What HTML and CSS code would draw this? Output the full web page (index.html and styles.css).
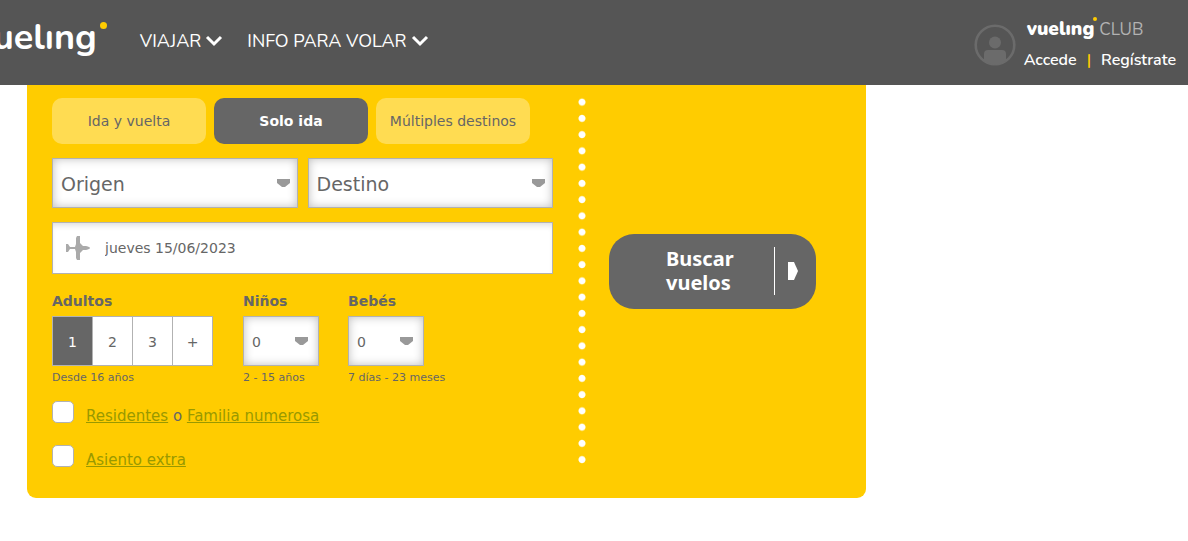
FILE: index.html
```html
<!DOCTYPE html>
<html lang="es">
<head>
<meta charset="utf-8">
<title>Vueling</title>
<link rel="stylesheet" href="styles.css">
</head>
<body>
<header class="header">
  <a class="logo" href="#">vuelıng<span class="logo-dot"></span></a>
  <nav class="nav">
    <a href="#">VIAJAR <svg class="chevron" viewBox="0 0 18 12"><path d="M2 2l7 7 7-7"/></svg></a>
    <a href="#">INFO PARA VOLAR <svg class="chevron" viewBox="0 0 18 12"><path d="M2 2l7 7 7-7"/></svg></a>
  </nav>
  <div class="account">
    <svg class="avatar" viewBox="0 0 42 42">
      <circle cx="21" cy="21" r="19.3" fill="none" stroke="#6b6b6b" stroke-width="2.6"/>
      <circle cx="21" cy="18.500" r="6" fill="#6b6b6b"/>
      <path d="M10 37v-7q0-4 4-4h14q4 0 4 4v7q-11 7-22 0z" fill="#6b6b6b"/>
    </svg>
    <div>
      <div class="club"><strong>vuelıng<span class="club-dot"></span></strong><span>CLUB</span></div>
      <div class="account-links"><a href="#">Accede</a><span class="divider">|</span><a href="#">Regístrate</a></div>
    </div>
  </div>
</header>
<main>
  <form class="search">
    <div class="fields">
      <div class="tabs">
        <button type="button" class="tab">Ida y vuelta</button>
        <button type="button" class="tab active">Solo ida</button>
        <button type="button" class="tab">Múltiples destinos</button>
      </div>
      <div class="route">
        <div class="select large">
          <select aria-label="Origen"><option>Origen</option></select>
          <svg class="arrow" viewBox="0 0 13 8"><path d="M0 0h13v4L8 8H5L0 4z"/></svg>
        </div>
        <div class="select large">
          <select aria-label="Destino"><option>Destino</option></select>
          <svg class="arrow" viewBox="0 0 13 8"><path d="M0 0h13v4L8 8H5L0 4z"/></svg>
        </div>
      </div>
      <div class="date">
        <svg class="plane" viewBox="0 0 26 26"><path d="M1 9h2l2 3h5l1-3V3l1-2h3v7l3 3h3q4 1 4 2t-4 2h-3l-3 3v7h-3l-1-2v-6l-1-3H5l-2 3H1z"/></svg>
        <input type="text" aria-label="Fecha de ida" value="jueves 15/06/2023">
      </div>
      <div class="passengers">
        <fieldset class="adults">
          <legend class="label">Adultos</legend>
          <div class="counts">
            <label><input type="radio" name="adults" checked><span>1</span></label>
            <label><input type="radio" name="adults"><span>2</span></label>
            <label><input type="radio" name="adults"><span>3</span></label>
            <button type="button" aria-label="Más adultos">+</button>
          </div>
          <div class="hint">Desde 16 años</div>
        </fieldset>
        <div class="group">
          <label class="label" for="children">Niños</label>
          <div class="select small">
            <select id="children"><option>0</option></select>
            <svg class="arrow" viewBox="0 0 13 8"><path d="M0 0h13v4L8 8H5L0 4z"/></svg>
          </div>
          <div class="hint">2 - 15 años</div>
        </div>
        <div class="group">
          <label class="label" for="babies">Bebés</label>
          <div class="select small">
            <select id="babies"><option>0</option></select>
            <svg class="arrow" viewBox="0 0 13 8"><path d="M0 0h13v4L8 8H5L0 4z"/></svg>
          </div>
          <div class="hint">7 días - 23 meses</div>
        </div>
      </div>
      <div class="options">
        <div class="option">
          <input type="checkbox" aria-labelledby="discount">
          <span id="discount"><a href="#">Residentes</a> o <a href="#">Familia numerosa</a></span>
        </div>
        <div class="option">
          <input type="checkbox" aria-labelledby="seat">
          <span id="seat"><a href="#">Asiento extra</a></span>
        </div>
      </div>
    </div>
    <div class="dots"></div>
    <button type="submit" class="submit">
      <span class="submit-text">Buscar vuelos</span>
      <span class="submit-icon"><svg viewBox="0 0 10 18"><path d="M0 0h6l4 9-4 9H0z"/></svg></span>
    </button>
  </form>
</main>
</body>
</html>
```
FILE: styles.css
```css
* { box-sizing: border-box; }
body {
  margin: 0;
  background: #fff;
  color: #666;
  font: 14px/20px Verdana, "DejaVu Sans", sans-serif;
}
button, input, select { font: inherit; color: inherit; margin: 0; }

.header {
  display: flex;
  align-items: center;
  height: 85px;
  padding-right: 12px;
  background: #555;
  color: #fff;
  font-family: Nunito, Lato, sans-serif;
  overflow: hidden;
}
.header a { color: inherit; text-decoration: none; }
.logo {
  position: relative;
  margin-left: -26px;
  padding-bottom: 10px;
  font-size: 36px;
  font-weight: 700;
  line-height: 48px;
}
.logo-dot {
  position: absolute;
  top: 8px;
  right: -10px;
  width: 7px;
  height: 7px;
  border-radius: 50%;
  background: #fc0;
}
.nav {
  display: flex;
  gap: 24px;
  margin-left: 43px;
  padding-bottom: 4px;
  font-size: 18px;
  line-height: 24px;
}
.nav a { display: flex; align-items: center; gap: 4px; }
.chevron { width: 18px; height: 12px; fill: none; stroke: #fff; stroke-width: 3; }
.account { display: flex; align-items: center; gap: 8px; margin-left: auto; padding-top: 5px; }
.avatar { width: 42px; height: 42px; }
.account > div { padding-bottom: 3px; }
.club {
  display: flex;
  align-items: baseline;
  gap: 5px;
  padding: 0 3px 4px;
  font-size: 17px;
  line-height: 28px;
  color: #b2b2b2;
}
.club strong { position: relative; color: #fff; font-size: 19px; font-weight: 900; }
.club-dot {
  position: absolute;
  top: 2px;
  right: -3px;
  width: 4px;
  height: 4px;
  border-radius: 50%;
  background: #fc0;
}
.account-links { display: flex; font-size: 16px; font-weight: 600; line-height: 24px; }
.divider { margin: 0 10px; color: #fc0; }

.search {
  display: flex;
  max-width: 839px;
  margin-left: 27px;
  padding: 13px 50px 31px 25px;
  border-radius: 0 0 9px 9px;
  background: #fc0;
}
.fields { flex: 1; }
.tabs { display: flex; gap: 8px; }
.tab {
  width: 154px;
  height: 46px;
  padding: 0;
  border: 0;
  border-radius: 10px;
  background: #ffdc52;
}
.tab.active { background: #666; color: #fff; font-weight: 700; }
.route { display: grid; grid-template-columns: 1fr 1fr; gap: 10px; margin: 14px 0; }
.select { position: relative; }
.select select {
  display: block;
  width: 100%;
  height: 50px;
  padding: 2px 8px 0;
  border: 1px solid #b2b2b2;
  border-radius: 0;
  background: #fff;
  box-shadow: inset 0 0 10px rgba(0, 0, 0, .25);
  appearance: none;
}
.large select { font-size: 19px; line-height: 28px; }
.arrow { position: absolute; top: 21px; right: 8px; width: 13px; height: 8px; fill: #999; }
.small .arrow { right: 11px; }
.date {
  display: flex;
  align-items: center;
  gap: 14px;
  height: 52px;
  padding: 0 12px;
  border: 1px solid #b2b2b2;
  background: #fff;
  box-shadow: inset 0 5px 6px -3px rgba(0, 0, 0, .15);
}
.date input { flex: 1; padding: 0; border: 0; background: none; }
.plane { width: 26px; height: 26px; fill: #aaa; }

.passengers { display: flex; gap: 30px; margin-top: 17px; }
.adults { margin: 0; padding: 0; border: 0; }
.label { display: block; padding: 0; margin-bottom: 5px; font-weight: 700; }
.counts { display: flex; border: 1px solid #b2b2b2; background: #fff; }
.counts label { position: relative; }
.counts input { position: absolute; inset: 0; opacity: 0; }
.counts span, .counts button {
  display: block;
  width: 40px;
  height: 48px;
  padding: 0;
  border: 0;
  border-right: 1px solid #b2b2b2;
  background: #fff;
  line-height: 50px;
  text-align: center;
}
.counts button { width: 39px; border-right: 0; }
.counts input:checked + span { background: #666; color: #fff; }
.group { width: 75px; }
.small { width: 76px; }
.hint { margin-top: 5px; font-size: 11px; line-height: 14px; white-space: nowrap; }

.options { display: grid; gap: 22px; margin-top: 16px; }
.option { display: flex; gap: 12px; height: 22px; font-size: 15px; }
.option input {
  width: 22px;
  height: 22px;
  border: 1px solid #b2b2b2;
  border-radius: 5px;
  background: #fff;
  appearance: none;
}
.option span { padding-top: 5px; }
.option a { color: #990; }

.dots {
  width: 8px;
  margin: -4px 23px -1px 25px;
  background: radial-gradient(circle, #fff 3px, rgba(255, 255, 255, 0) 4px) 0 0 / 8px 16px;
  background-repeat: no-repeat round;
}
.submit {
  display: flex;
  align-items: center;
  align-self: center;
  width: 207px;
  height: 75px;
  margin-top: -22px;
  padding: 0 18px 2px 13px;
  border: 0;
  border-radius: 25px;
  background: #666;
  color: #fff;
  font: 700 20px/24px "Noto Sans", sans-serif;
}
.submit-text { flex: 1; padding: 0 32px 0 44px; text-align: left; }
.submit-icon { display: flex; align-items: center; height: 48px; padding-left: 13px; border-left: 1px solid #fff; }
.submit-icon svg { width: 10px; height: 18px; fill: #fff; }
```
